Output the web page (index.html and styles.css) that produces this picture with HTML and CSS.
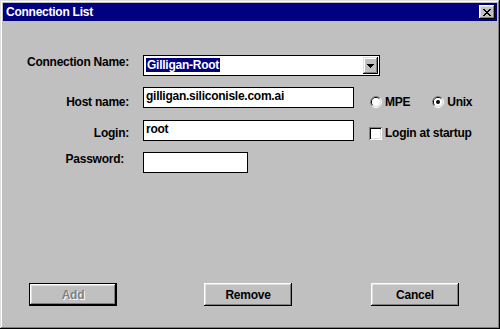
FILE: index.html
```html
<!DOCTYPE html>
<html lang="en">
<head>
    <meta charset="UTF-8">
    <title>Connection List</title>
    <link rel="stylesheet" href="styles.css">
</head>
<body>

    <div class="window">
        <div class="titlebar">
            <span class="title">Connection List</span>
            <span class="close-btn">
                <svg width="8" height="7" viewBox="0 0 8 7" shape-rendering="crispEdges">
                    <path d="M0 0h2v1H0zM6 0h2v1H6zM1 1h2v1H1zM5 1h2v1H5zM2 2h4v1H2zM3 3h2v1H3zM2 4h4v1H2zM1 5h2v1H1zM5 5h2v1H5zM0 6h2v1H0zM6 6h2v1H6z" fill="#000"/>
                </svg>
            </span>
        </div>

        <form class="dialog">
            <div class="row">
                <label class="field-label">Connection Name:</label>
                <div class="combo">
                    <span class="combo-value"><span class="selected">Gilligan-Root</span></span>
                    <span class="combo-btn">
                        <svg width="7" height="4" viewBox="0 0 7 4" shape-rendering="crispEdges">
                            <path d="M0 0h7v1H0zM1 1h5v1H1zM2 2h3v1H2zM3 3h1v1H3z" fill="#000"/>
                        </svg>
                    </span>
                </div>
            </div>

            <div class="row row-host">
                <label class="field-label lbl-host">Host name:</label>
                <div class="textbox wide">gilligan.siliconisle.com.ai</div>
                <div class="options">
                    <span class="radio">
                        <svg width="12" height="12" viewBox="0 0 12 12">
                            <path d="M2.1 9.9A5.5 5.5 0 0 1 9.9 2.1" stroke="#808080" fill="none"/>
                            <path d="M9.9 2.1A5.5 5.5 0 0 1 2.1 9.9" stroke="#fff" fill="none"/>
                            <path d="M2.8 9.2A4.5 4.5 0 0 1 9.2 2.8" stroke="#000" fill="none"/>
                            <path d="M9.2 2.8A4.5 4.5 0 0 1 2.8 9.2" stroke="#dfdfdf" fill="none"/>
                            <circle cx="6" cy="6" r="4" fill="#fff"/>
                        </svg>
                        MPE
                    </span>
                    <span class="radio radio-unix">
                        <svg width="12" height="12" viewBox="0 0 12 12">
                            <path d="M2.1 9.9A5.5 5.5 0 0 1 9.9 2.1" stroke="#808080" fill="none"/>
                            <path d="M9.9 2.1A5.5 5.5 0 0 1 2.1 9.9" stroke="#fff" fill="none"/>
                            <path d="M2.8 9.2A4.5 4.5 0 0 1 9.2 2.8" stroke="#000" fill="none"/>
                            <path d="M9.2 2.8A4.5 4.5 0 0 1 2.8 9.2" stroke="#dfdfdf" fill="none"/>
                            <circle cx="6" cy="6" r="4" fill="#fff"/>
                            <circle cx="6" cy="6" r="2" fill="#000"/>
                        </svg>
                        Unix
                    </span>
                </div>
            </div>

            <div class="row row-login">
                <label class="field-label lbl-login">Login:</label>
                <div class="textbox wide">root</div>
                <div class="options">
                    <span class="checkbox"><span class="check-box"></span>Login at startup</span>
                </div>
            </div>

            <div class="row row-pass">
                <label class="field-label lbl-pass">Password:</label>
                <div class="textbox short"></div>
            </div>

            <div class="buttons">
                <span class="btn btn-default btn-add">Add</span>
                <span class="btn btn-remove">Remove</span>
                <span class="btn btn-cancel">Cancel</span>
            </div>
        </form>
    </div>

</body>
</html>
```

FILE: styles.css
```css
/* Page */
body {
    margin: 0;
    padding: 0;
    font-family: "Liberation Sans", Arial, sans-serif;
    font-size: 12px;
    font-weight: bold;
    letter-spacing: -0.25px;
    line-height: 14px;
    color: #000;
}

/* Window frame */
.window {
    width: 500px;
    height: 329px;
    box-sizing: border-box;
    padding: 3px;
    background: #c0c0c0;
    box-shadow: inset -1px -1px #000, inset 1px 1px #dfdfdf,
                inset -2px -2px #808080, inset 2px 2px #fff;
}

/* Title bar */
.titlebar {
    height: 18px;
    background: #000080;
    display: flex;
    align-items: center;
    justify-content: space-between;
    padding: 0 2px 0 3px;
}

.title {
    color: #fff;
}

.close-btn {
    width: 16px;
    height: 14px;
    box-sizing: border-box;
    background: #c0c0c0;
    display: flex;
    align-items: center;
    justify-content: center;
    box-shadow: inset -1px -1px #000, inset 1px 1px #fff,
                inset -2px -2px #808080, inset 2px 2px #dfdfdf;
}

/* Form */
.dialog {
    margin: 0;
    padding-top: 34px;
}

.row {
    display: flex;
    align-items: flex-start;
    height: 21px;
}

.row-host { margin-top: 11px; }
.row-login { margin-top: 12px; }
.row-pass { margin-top: 11px; }

.field-label {
    width: 126px;
    margin-right: 14px;
    text-align: right;
    white-space: nowrap;
}

.lbl-host { margin-top: 8px; }
.lbl-login { margin-top: 6px; }
.lbl-pass { padding-right: 5px; box-sizing: border-box; }

/* Text fields */
.textbox {
    height: 21px;
    box-sizing: border-box;
    border: 1px solid #000;
    background: #fff;
    padding: 1px 2px;
    white-space: nowrap;
}

.wide { width: 211px; }
.short { width: 105px; }

/* Combo box */
.combo {
    width: 237px;
    height: 21px;
    box-sizing: border-box;
    border: 1px solid #000;
    background: #fff;
    display: flex;
    justify-content: space-between;
    padding: 1px;
}

.combo-value {
    padding: 1px 0 0 1px;
}

.selected {
    background: #000080;
    color: #fff;
    padding: 0 1px;
}

.combo-btn {
    width: 15px;
    height: 17px;
    box-sizing: border-box;
    background: #c0c0c0;
    display: flex;
    align-items: center;
    justify-content: center;
    box-shadow: inset -1px -1px #000, inset 1px 1px #dfdfdf,
                inset -2px -2px #808080, inset 2px 2px #fff;
}

/* Radio and check options */
.options {
    display: flex;
    margin-left: 16px;
    margin-top: 8px;
}

.row-login .options { margin-top: 6px; margin-left: 15px; }

.radio, .checkbox {
    display: flex;
    align-items: center;
    gap: 3px;
}

.radio svg { display: block; }

.radio-unix { margin-left: 22px; }

.check-box {
    width: 13px;
    height: 13px;
    background: #fff;
    box-shadow: inset 1px 1px #808080, inset -1px -1px #fff,
                inset 2px 2px #000, inset -2px -2px #dfdfdf;
}

/* Buttons */
.buttons {
    display: flex;
    margin-top: 110px;
    padding-left: 26px;
}

.btn {
    width: 88px;
    height: 23px;
    box-sizing: border-box;
    display: flex;
    align-items: center;
    justify-content: center;
    background: #c0c0c0;
    box-shadow: inset -1px -1px #000, inset 1px 1px #fff,
                inset -2px -2px #808080, inset 2px 2px #dfdfdf;
}

.btn-default {
    border: 1px solid #000;
}

.btn-add {
    color: #808080;
    text-shadow: 1px 1px #fff;
}

.btn-remove { margin-left: 87px; }
.btn-cancel { margin-left: 79px; }
```
